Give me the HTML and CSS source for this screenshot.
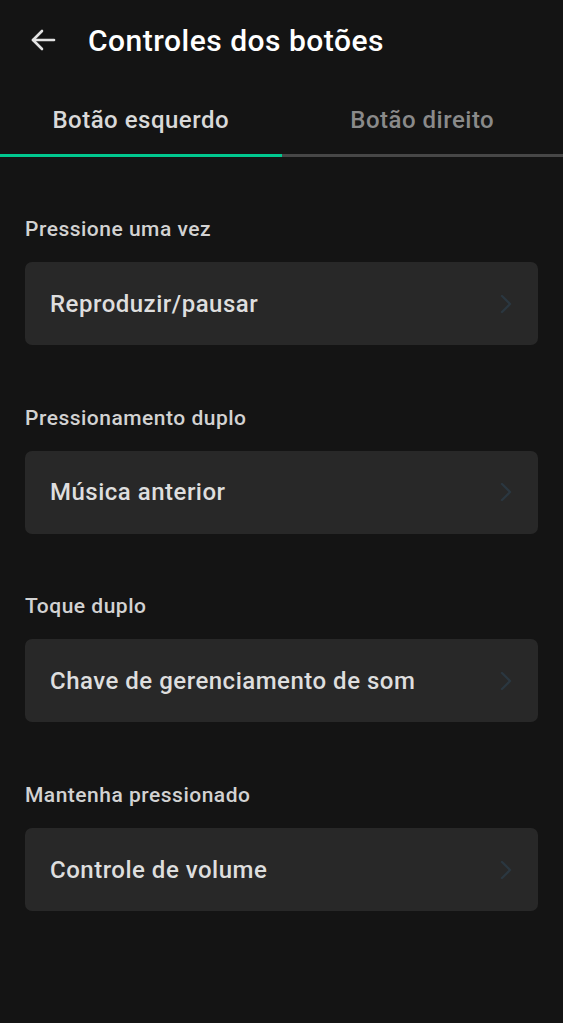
FILE: index.html
```html
<!DOCTYPE html>
<html lang="pt">
<head>
<meta charset="utf-8">
<title>Controles dos botões</title>
<link rel="stylesheet" href="styles.css">
</head>
<body>
<header class="appbar">
  <svg class="back" width="28" height="24" viewBox="0 0 28 24" fill="none" stroke="#e2e2e2" stroke-width="2.6" stroke-linecap="round" stroke-linejoin="round">
    <path d="M25 12H4"/>
    <path d="M13 3L4 12l9 9"/>
  </svg>
  <h1 class="title">Controles dos botões</h1>
</header>
<nav class="tabs">
  <div class="tab active">Botão esquerdo</div>
  <div class="tab">Botão direito</div>
</nav>
<main class="list">
  <section class="group">
    <div class="label">Pressione uma vez</div>
    <div class="card"><span>Reproduzir/pausar</span>
      <svg class="chev" width="12" height="20" viewBox="0 0 12 20" fill="none" stroke="#2b3740" stroke-width="2.4" stroke-linecap="round" stroke-linejoin="round"><path d="M2 2l8 8-8 8"/></svg>
    </div>
  </section>
  <section class="group">
    <div class="label">Pressionamento duplo</div>
    <div class="card"><span>Música anterior</span>
      <svg class="chev" width="12" height="20" viewBox="0 0 12 20" fill="none" stroke="#2b3740" stroke-width="2.4" stroke-linecap="round" stroke-linejoin="round"><path d="M2 2l8 8-8 8"/></svg>
    </div>
  </section>
  <section class="group">
    <div class="label">Toque duplo</div>
    <div class="card"><span>Chave de gerenciamento de som</span>
      <svg class="chev" width="12" height="20" viewBox="0 0 12 20" fill="none" stroke="#2b3740" stroke-width="2.4" stroke-linecap="round" stroke-linejoin="round"><path d="M2 2l8 8-8 8"/></svg>
    </div>
  </section>
  <section class="group">
    <div class="label">Mantenha pressionado</div>
    <div class="card"><span>Controle de volume</span>
      <svg class="chev" width="12" height="20" viewBox="0 0 12 20" fill="none" stroke="#2b3740" stroke-width="2.4" stroke-linecap="round" stroke-linejoin="round"><path d="M2 2l8 8-8 8"/></svg>
    </div>
  </section>
</main>
</body>
</html>
```
FILE: styles.css
```css
html, body {
  margin: 0;
  padding: 0;
  background: #141414;
  font-family: Roboto, "Noto Sans", "Liberation Sans", sans-serif;
  color: #e0e0e0;
}
.appbar {
  height: 80px;
  display: flex;
  align-items: center;
  padding-left: 29px;
  box-sizing: border-box;
}
.back {
  display: block;
  margin-right: 31px;
}
.title {
  margin: 0;
  font-size: 30px;
  font-weight: 500;
  color: #ffffff;
  letter-spacing: 0.5px;
}
.tabs {
  display: flex;
}
.tab {
  flex: 1;
  height: 77px;
  box-sizing: border-box;
  padding-top: 6px;
  display: flex;
  align-items: center;
  justify-content: center;
  font-size: 24px;
  font-weight: 500;
  letter-spacing: 0.5px;
  color: #8a8a8a;
  border-bottom: 3px solid #474747;
}
.tab.active {
  color: #d9d9d9;
  border-bottom-color: #00c88f;
}
.list {
  padding: 60px 25px 0;
  display: flex;
  flex-direction: column;
  gap: 60.7px;
}
.label {
  font-size: 21px;
  line-height: 24px;
  font-weight: 500;
  letter-spacing: 0.5px;
  color: #d2d2d2;
  margin-bottom: 21px;
}
.card {
  height: 83px;
  background: #282828;
  border-radius: 7px;
  display: flex;
  align-items: center;
  justify-content: space-between;
  padding: 0 26px 0 25px;
  font-size: 24px;
  font-weight: 500;
  letter-spacing: 0.5px;
  color: #dedede;
}
.chev {
  display: block;
}
```
